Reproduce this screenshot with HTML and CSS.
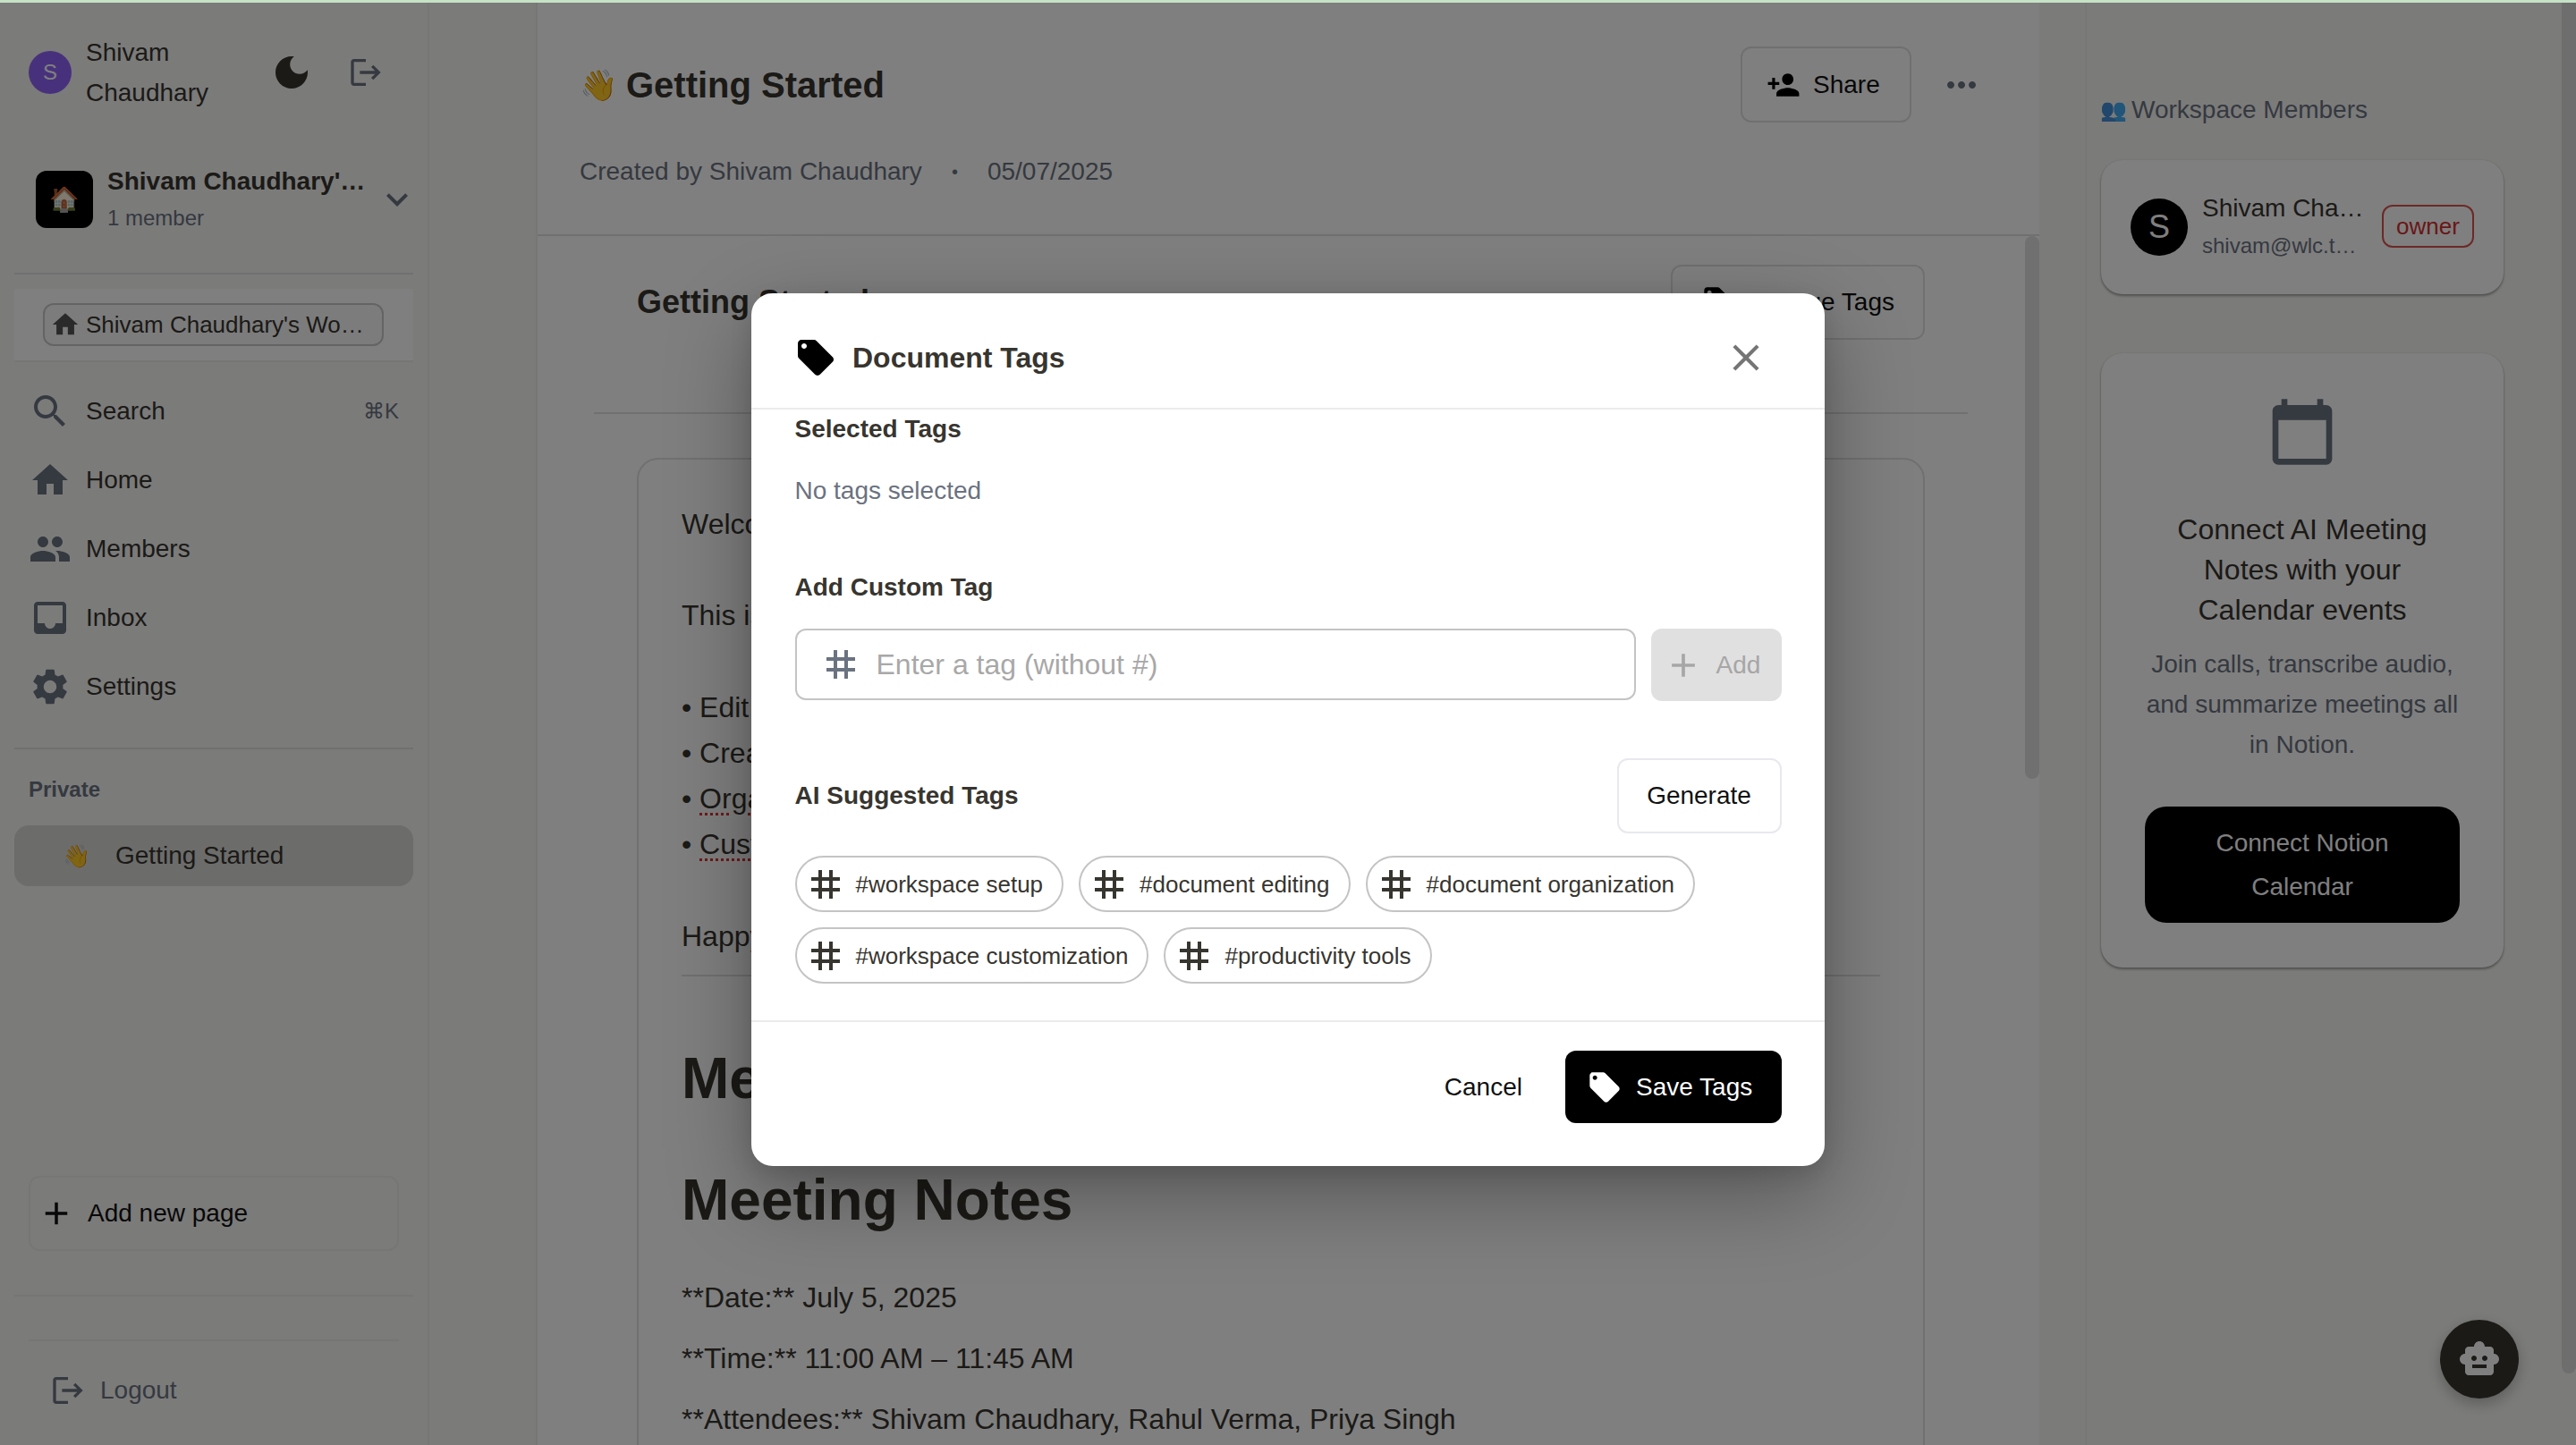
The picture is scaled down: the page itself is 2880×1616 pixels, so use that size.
FILE: index.html
```html
<!DOCTYPE html>
<html lang="en">
<head>
    <meta charset="UTF-8">
    <title>Getting Started</title>
    <link rel="stylesheet" href="styles.css">
</head>
<body>
    <svg class="icon-defs" aria-hidden="true">
        <symbol id="i-search" viewBox="0 0 24 24"><path d="M15.5 14h-.79l-.28-.27C15.41 12.59 16 11.11 16 9.5 16 5.91 13.09 3 9.5 3S3 5.91 3 9.5 5.91 16 9.5 16c1.61 0 3.09-.59 4.23-1.57l.27.28v.79l5 4.99L20.49 19zm-6 0C7.01 14 5 11.99 5 9.5S7.01 5 9.5 5 14 7.01 14 9.5 11.99 14 9.5 14"/></symbol>
        <symbol id="i-home" viewBox="0 0 24 24"><path d="M10 20v-6h4v6h5v-8h3L12 3 2 12h3v8z"/></symbol>
        <symbol id="i-people" viewBox="0 0 24 24"><path d="M16 11c1.66 0 2.99-1.34 2.99-3S17.66 5 16 5c-1.66 0-3 1.34-3 3s1.34 3 3 3m-8 0c1.66 0 2.99-1.34 2.99-3S9.66 5 8 5C6.34 5 5 6.34 5 8s1.34 3 3 3m0 2c-2.33 0-7 1.17-7 3.5V19h14v-2.5c0-2.33-4.67-3.5-7-3.5m8 0c-.29 0-.62.02-.97.05 1.16.84 1.97 1.97 1.97 3.45V19h6v-2.5c0-2.33-4.67-3.5-7-3.5"/></symbol>
        <symbol id="i-inbox" viewBox="0 0 24 24"><path d="M19 3H5c-1.1 0-2 .9-2 2v14c0 1.1.9 2 2 2h14c1.1 0 2-.9 2-2V5c0-1.1-.9-2-2-2m0 12h-4c0 1.66-1.35 3-3 3s-3-1.34-3-3H5V5h14z"/></symbol>
        <symbol id="i-settings" viewBox="0 0 24 24"><path d="M19.14 12.94c.04-.3.06-.61.06-.94 0-.32-.02-.64-.07-.94l2.03-1.58c.18-.14.23-.41.12-.61l-1.92-3.32c-.12-.22-.37-.29-.59-.22l-2.39.96c-.5-.38-1.03-.7-1.62-.94l-.36-2.54c-.04-.24-.24-.41-.48-.41h-3.84c-.24 0-.43.17-.47.41l-.36 2.54c-.59.24-1.13.57-1.62.94l-2.39-.96c-.22-.08-.47 0-.59.22L2.74 8.87c-.12.21-.08.47.12.61l2.03 1.58c-.05.3-.09.63-.09.94s.02.64.07.94l-2.03 1.58c-.18.14-.23.41-.12.61l1.92 3.32c.12.22.37.29.59.22l2.39-.96c.5.38 1.03.7 1.62.94l.36 2.54c.05.24.24.41.48.41h3.84c.24 0 .44-.17.47-.41l.36-2.54c.59-.24 1.13-.56 1.62-.94l2.39.96c.22.08.47 0 .59-.22l1.92-3.32c.12-.22.07-.47-.12-.61zM12 15.6c-1.98 0-3.6-1.62-3.6-3.6s1.62-3.6 3.6-3.6 3.6 1.62 3.6 3.6-1.62 3.6-3.6 3.6"/></symbol>
        <symbol id="i-moon" viewBox="0 0 24 24"><path d="M12 3c-4.97 0-9 4.03-9 9s4.03 9 9 9 9-4.03 9-9c0-.46-.04-.92-.1-1.36-.98 1.37-2.58 2.26-4.4 2.26-2.98 0-5.4-2.42-5.4-5.4 0-1.81.89-3.42 2.26-4.4-.44-.06-.9-.1-1.36-.1"/></symbol>
        <symbol id="i-logout" viewBox="0 0 24 24"><path d="m17 7-1.41 1.41L18.17 11H8v2h10.17l-2.58 2.58L17 17l5-5zM4 5h8V3H4c-1.1 0-2 .9-2 2v14c0 1.1.9 2 2 2h8v-2H4z"/></symbol>
        <symbol id="i-expand" viewBox="0 0 24 24"><path d="M16.59 8.59 12 13.17 7.41 8.59 6 10l6 6 6-6z"/></symbol>
        <symbol id="i-add" viewBox="0 0 24 24"><path d="M19 13h-6v6h-2v-6H5v-2h6V5h2v6h6v2z"/></symbol>
        <symbol id="i-person-add" viewBox="0 0 24 24"><path d="M15 12c2.21 0 4-1.79 4-4s-1.79-4-4-4-4 1.79-4 4 1.79 4 4 4m-9-2V7H4v3H1v2h3v3h2v-3h3v-2zm9 4c-2.67 0-8 1.34-8 4v2h16v-2c0-2.66-5.33-4-8-4"/></symbol>
        <symbol id="i-more" viewBox="0 0 24 24"><path d="M6 10c-1.1 0-2 .9-2 2s.9 2 2 2 2-.9 2-2-.9-2-2-2m12 0c-1.1 0-2 .9-2 2s.9 2 2 2 2-.9 2-2-.9-2-2-2m-6 0c-1.1 0-2 .9-2 2s.9 2 2 2 2-.9 2-2-.9-2-2-2"/></symbol>
        <symbol id="i-label" viewBox="0 0 24 24"><path d="M21.41 11.58l-9-9C12.05 2.22 11.55 2 11 2H4c-1.1 0-2 .9-2 2v7c0 .55.22 1.05.59 1.42l9 9c.36.36.86.58 1.41.58.55 0 1.05-.22 1.41-.59l7-7c.37-.36.59-.86.59-1.41 0-.55-.23-1.06-.59-1.42zM5.5 7C4.67 7 4 6.33 4 5.5S4.67 4 5.5 4 7 4.67 7 5.5 6.33 7 5.5 7z"/></symbol>
        <symbol id="i-close" viewBox="0 0 24 24"><path d="M19 6.41 17.59 5 12 10.59 6.41 5 5 6.41 10.59 12 5 17.59 6.41 19 12 13.41 17.59 19 19 17.59 13.41 12z"/></symbol>
        <symbol id="i-tag" viewBox="0 0 24 24"><path d="M20 10V8h-4V4h-2v4h-4V4H8v4H4v2h4v4H4v2h4v4h2v-4h4v4h2v-4h4v-2h-4v-4zm-6 4h-4v-4h4z"/></symbol>
        <symbol id="i-calendar" viewBox="0 0 24 24"><path d="M20 3h-1V1h-2v2H7V1H5v2H4c-1.1 0-2 .9-2 2v16c0 1.1.9 2 2 2h16c1.1 0 2-.9 2-2V5c0-1.1-.9-2-2-2zm0 18H4V8h16v13z"/></symbol>
        <symbol id="i-bot" viewBox="0 0 24 24"><path d="M20 9V7c0-1.1-.9-2-2-2h-3c0-1.66-1.34-3-3-3S9 3.34 9 5H6c-1.1 0-2 .9-2 2v2c-1.66 0-3 1.34-3 3s1.34 3 3 3v4c0 1.1.9 2 2 2h12c1.1 0 2-.9 2-2v-4c1.66 0 3-1.34 3-3s-1.34-3-3-3zM7.5 11.5c0-.83.67-1.5 1.5-1.5s1.5.67 1.5 1.5S9.83 13 9 13s-1.5-.67-1.5-1.5zM16 17H8v-2h8v2zm-1-4c-.83 0-1.5-.67-1.5-1.5S14.17 10 15 10s1.5.67 1.5 1.5S15.83 13 15 13z"/></symbol>
    </svg>

    <div class="topbar"></div>

    <div class="app">
        <aside class="sidebar">
            <div class="profile">
                <div class="profile-avatar">S</div>
                <div class="profile-name">Shivam Chaudhary</div>
                <svg class="icon moon"><use href="#i-moon"/></svg>
                <svg class="icon profile-logout"><use href="#i-logout"/></svg>
            </div>

            <div class="workspace">
                <div class="workspace-logo">🏠</div>
                <div class="workspace-info">
                    <div class="workspace-name">Shivam Chaudhary's Workspace</div>
                    <div class="workspace-count">1 member</div>
                </div>
                <svg class="icon chevron"><use href="#i-expand"/></svg>
            </div>

            <div class="side-rule side-rule-top"></div>
            <div class="crumb-band">
                <div class="crumb">
                    <svg class="icon crumb-icon"><use href="#i-home"/></svg>
                    <span class="crumb-text">Shivam Chaudhary's Workspace</span>
                </div>
            </div>

            <nav class="nav">
                <a class="nav-item"><svg class="icon"><use href="#i-search"/></svg><span>Search</span><kbd class="shortcut">⌘K</kbd></a>
                <a class="nav-item"><svg class="icon"><use href="#i-home"/></svg><span>Home</span></a>
                <a class="nav-item"><svg class="icon"><use href="#i-people"/></svg><span>Members</span></a>
                <a class="nav-item"><svg class="icon"><use href="#i-inbox"/></svg><span>Inbox</span></a>
                <a class="nav-item"><svg class="icon"><use href="#i-settings"/></svg><span>Settings</span></a>
            </nav>

            <div class="section-label">Private</div>
            <a class="page-item"><span class="page-emoji">👋</span><span>Getting Started</span></a>

            <button class="add-page"><svg class="icon"><use href="#i-add"/></svg><span>Add new page</span></button>
            <div class="side-rule"></div>
            <div class="side-rule side-rule-short"></div>
            <a class="logout"><svg class="icon"><use href="#i-logout"/></svg><span>Logout</span></a>
        </aside>

        <main class="main">
            <header class="doc-header">
                <div class="doc-header-row">
                    <h1 class="doc-title"><span class="doc-emoji">👋</span>Getting Started</h1>
                    <button class="btn-outline share"><svg class="icon"><use href="#i-person-add"/></svg>Share</button>
                    <svg class="icon more"><use href="#i-more"/></svg>
                </div>
                <div class="doc-meta">
                    <span>Created by Shivam Chaudhary</span>
                    <span class="doc-meta-dot">•</span>
                    <span>05/07/2025</span>
                </div>
            </header>

            <div class="doc-scroll">
                <div class="doc-title-row">
                    <h2 class="doc-subtitle">Getting Started</h2>
                    <button class="btn-outline manage"><svg class="icon"><use href="#i-label"/></svg>Manage Tags</button>
                </div>
                <div class="doc-rule"></div>
                <article class="doc-card">
                    <p>Welcome to your workspace</p>
                    <p class="after-blank">This is your first page.</p>
                    <p class="after-blank">• Edit this page</p>
                    <p>• Create new pages</p>
                    <p>• <span class="misspelt">Organize</span> your notes</p>
                    <p>• <span class="misspelt">Customize</span> your space</p>
                    <p class="after-blank">Happy writing!</p>
                    <hr class="doc-hr">
                    <h1 class="doc-h1">Meeting Notes</h1>
                    <h1 class="doc-h1 doc-h1-second">Meeting Notes</h1>
                    <p class="note note-first">**Date:** July 5, 2025</p>
                    <p class="note">**Time:** 11:00 AM – 11:45 AM</p>
                    <p class="note">**Attendees:** Shivam Chaudhary, Rahul Verma, Priya Singh</p>
                </article>
                <div class="doc-thumb"></div>
            </div>
        </main>

        <aside class="panel">
            <div class="panel-title"><span class="panel-emoji">👥</span>Workspace Members</div>
            <div class="card member">
                <div class="member-avatar">S</div>
                <div class="member-info">
                    <div class="member-name">Shivam Chaudhary</div>
                    <div class="member-mail">shivam@wlc.tech.com</div>
                </div>
                <span class="owner-chip">owner</span>
            </div>
            <div class="card calendar">
                <svg class="icon calendar-icon"><use href="#i-calendar"/></svg>
                <h3 class="calendar-title">Connect AI Meeting Notes with your Calendar events</h3>
                <p class="calendar-text">Join calls, transcribe audio, and summarize meetings all in Notion.</p>
                <button class="calendar-btn">Connect Notion Calendar</button>
            </div>
        </aside>
    </div>

    <div class="page-thumb"></div>
    <button class="fab"><svg class="icon"><use href="#i-bot"/></svg></button>

    <div class="overlay">
        <div class="modal">
            <div class="modal-head">
                <svg class="icon modal-tag"><use href="#i-label"/></svg>
                <h2 class="modal-title">Document Tags</h2>
                <svg class="icon modal-close"><use href="#i-close"/></svg>
            </div>
            <div class="modal-body">
                <h4 class="modal-label">Selected Tags</h4>
                <p class="no-tags">No tags selected</p>
                <h4 class="modal-label custom-label">Add Custom Tag</h4>
                <div class="tag-form">
                    <div class="tag-input">
                        <svg class="icon"><use href="#i-tag"/></svg>
                        <input type="text" placeholder="Enter a tag (without #)">
                    </div>
                    <button class="add-btn"><svg class="icon"><use href="#i-add"/></svg>Add</button>
                </div>
                <div class="ai-head">
                    <h4 class="modal-label">AI Suggested Tags</h4>
                    <button class="generate">Generate</button>
                </div>
                <div class="chips">
                    <span class="chip"><svg class="icon"><use href="#i-tag"/></svg>#workspace setup</span>
                    <span class="chip"><svg class="icon"><use href="#i-tag"/></svg>#document editing</span>
                    <span class="chip"><svg class="icon"><use href="#i-tag"/></svg>#document organization</span>
                    <span class="chip"><svg class="icon"><use href="#i-tag"/></svg>#workspace customization</span>
                    <span class="chip"><svg class="icon"><use href="#i-tag"/></svg>#productivity tools</span>
                </div>
            </div>
            <div class="modal-foot">
                <button class="cancel">Cancel</button>
                <button class="save"><svg class="icon"><use href="#i-label"/></svg>Save Tags</button>
            </div>
        </div>
    </div>
</body>
</html>
```

FILE: styles.css
```css
:root {
    --text: #37352f;
    --muted: #6b7280;
    --side-bg: #f7f7f5;
    --line: #e0e0e0;
    --font: "Liberation Sans", Arial, sans-serif;
}

* {
    box-sizing: border-box;
}

body {
    margin: 0;
    width: 2880px;
    height: 1616px;
    overflow: hidden;
    position: relative;
    background: var(--side-bg);
    color: var(--text);
    font-family: var(--font);
    font-size: 28px;
    line-height: 44px;
}

h1, h2, h3, h4, p {
    margin: 0;
}

button {
    font-family: var(--font);
    font-size: 28px;
    cursor: pointer;
    background: none;
    border: none;
    padding: 0;
}

.icon-defs {
    display: none;
}

.icon {
    display: block;
    flex: none;
    width: 48px;
    height: 48px;
    fill: currentColor;
}

.topbar {
    position: relative;
    z-index: 20;
    height: 3px;
    background: #c6e2c6;
}

.app {
    display: flex;
    height: 1613px;
}

/* sidebar */

.sidebar {
    width: 480px;
    flex: none;
    display: flex;
    flex-direction: column;
    border-right: 2px solid #efefed;
}

.profile {
    display: flex;
    align-items: center;
    height: 156px;
    padding-left: 32px;
}

.profile-avatar {
    width: 48px;
    height: 48px;
    flex: none;
    border-radius: 50%;
    background: #9063f8;
    color: #fff;
    font-size: 24px;
    display: flex;
    align-items: center;
    justify-content: center;
}

.profile-name {
    width: 206px;
    margin-left: 16px;
    line-height: 45px;
}

.moon {
    color: var(--text);
}

.profile-logout {
    width: 40px;
    height: 40px;
    margin-left: 39px;
    color: var(--muted);
}

.workspace {
    display: flex;
    align-items: center;
    margin-top: 24px;
    padding-left: 40px;
}

.workspace-logo {
    width: 64px;
    height: 64px;
    flex: none;
    background: #000;
    border-radius: 12px;
    font-size: 27px;
    display: flex;
    align-items: center;
    justify-content: center;
}

.workspace-info {
    width: 290px;
    margin-left: 16px;
}

.workspace-name {
    font-weight: 700;
    line-height: 40px;
    white-space: nowrap;
    overflow: hidden;
    text-overflow: ellipsis;
}

.workspace-count {
    margin-top: 3px;
    font-size: 24px;
    line-height: 36px;
    color: var(--muted);
}

.chevron {
    margin-left: 10px;
    color: var(--muted);
}

.side-rule {
    flex: none;
    height: 2px;
    margin: 49px 16px 0;
    background: #ececea;
}

.side-rule-top {
    margin-top: 43px;
    background: var(--line);
}

.side-rule-short {
    margin: 48px 32px 0;
}

.crumb-band {
    margin: 16px 16px 0;
    padding: 16px 0 16px 32px;
    background: #fefefe;
    border-bottom: 2px solid #ececea;
}

.crumb {
    display: flex;
    align-items: center;
    width: 381px;
    height: 48px;
    padding: 0 16px 0 6px;
    border: 2px solid #c8c8c8;
    border-radius: 12px;
    background: #f9f9f8;
}

.crumb-icon {
    width: 34px;
    height: 34px;
    color: #555;
}

.crumb-text {
    margin-left: 6px;
    font-size: 26px;
    white-space: nowrap;
    overflow: hidden;
    text-overflow: ellipsis;
}

.nav {
    margin-top: 16px;
}

.nav-item {
    display: flex;
    align-items: center;
    gap: 16px;
    height: 77px;
    padding: 0 32px;
}

.nav-item .icon {
    color: var(--muted);
}

.shortcut {
    margin-left: auto;
    font-family: var(--font);
    font-size: 24px;
    color: var(--muted);
}

.section-label {
    margin: 30px 16px 0;
    padding: 27px 0 0 16px;
    border-top: 2px solid var(--line);
    font-size: 24px;
    line-height: 36px;
    font-weight: 700;
    color: var(--muted);
}

.page-item {
    display: flex;
    align-items: center;
    height: 68px;
    margin: 22px 16px 0;
    padding-left: 54px;
    border-radius: 16px;
    background: #d8d8d6;
}

.page-emoji {
    width: 59px;
    font-size: 25px;
}

.add-page {
    display: flex;
    align-items: center;
    height: 84px;
    margin: auto 32px 0;
    padding-left: 8px;
    border: 2px solid #ececea;
    border-radius: 12px;
    color: #111;
}

.add-page .icon {
    width: 42px;
    height: 42px;
    margin-right: 14px;
}

.logout {
    display: flex;
    align-items: center;
    gap: 16px;
    height: 110px;
    margin-bottom: 6px;
    padding-left: 56px;
    color: var(--muted);
}

.logout .icon {
    width: 40px;
    height: 40px;
}

/* document */

.main {
    width: 1681px;
    flex: none;
    margin-left: 119px;
    display: flex;
    flex-direction: column;
    background: #fff;
    border-left: 2px solid #efefed;
}

.doc-header {
    flex: none;
    height: 261px;
    padding: 49px 63px 0 47px;
    border-bottom: 2px solid var(--line);
}

.doc-header-row {
    display: flex;
    align-items: center;
}

.doc-title {
    flex: 1;
    display: flex;
    align-items: center;
    padding-top: 2px;
    font-size: 40px;
    line-height: 83px;
}

.doc-emoji {
    width: 52px;
    font-size: 34px;
    font-weight: 400;
}

.btn-outline {
    display: flex;
    align-items: center;
    color: #111;
    border: 2px solid var(--line);
    border-radius: 12px;
    background: #fff;
}

.share {
    height: 85px;
    width: 191px;
    padding-left: 27px;
}

.share .icon {
    width: 38px;
    height: 38px;
    margin-right: 14px;
    color: #000;
}

.more {
    margin-left: 32px;
    color: var(--muted);
}

.doc-meta {
    display: flex;
    gap: 33px;
    margin-top: 35px;
    line-height: 40px;
    color: var(--muted);
}

.doc-meta-dot {
    font-size: 20px;
}

.doc-scroll {
    flex: 1;
    min-height: 0;
    overflow: hidden;
    position: relative;
    padding: 32px 128px 0 111px;
}

.doc-title-row {
    display: flex;
    align-items: center;
    justify-content: space-between;
}

.doc-subtitle {
    font-size: 36px;
}

.manage {
    height: 84px;
    padding: 0 32px;
}

.manage .icon {
    width: 40px;
    height: 40px;
    margin-right: 8px;
    color: #000;
}

.doc-rule {
    height: 2px;
    margin: 81px -48px 0 -48px;
    background: var(--line);
}

.doc-card {
    margin-top: 49px;
    height: 1200px;
    padding: 47px 48px 0;
    border: 2px solid var(--line);
    border-radius: 24px;
    font-size: 32px;
    line-height: 51.2px;
}

.after-blank {
    margin-top: 51.2px;
}

.misspelt {
    text-decoration: underline dotted #d33;
    text-decoration-thickness: 3px;
    text-underline-offset: 5px;
}

.doc-hr {
    height: 2px;
    margin: 17px 0 0;
    border: none;
    background: var(--line);
}

.doc-h1 {
    margin-top: 76px;
    font-size: 64px;
    line-height: 76px;
}

.doc-h1-second {
    margin-top: 60px;
}

.note {
    margin-top: 17px;
}

.note-first {
    margin-top: 46px;
}

.doc-thumb {
    position: absolute;
    top: 0;
    right: 0;
    width: 16px;
    height: 607px;
    border-radius: 8px;
    background: #e0e0e0;
}

/* right panel */

.panel {
    flex: 1;
    margin-left: 51px;
    padding: 100px 0 0 16px;
    border-left: 2px solid #efefed;
}

.panel-title {
    display: flex;
    align-items: center;
    line-height: 40px;
    color: var(--muted);
}

.panel-emoji {
    width: 35px;
    margin-left: -1px;
    font-size: 24px;
    opacity: 0.8;
}

.card {
    width: 450px;
    background: #fff;
    border-radius: 24px;
    box-shadow: 0 2px 3px rgba(0, 0, 0, 0.35), 0 0 2px rgba(0, 0, 0, 0.12);
}

.member {
    display: flex;
    align-items: center;
    height: 150px;
    margin-top: 36px;
    padding-left: 33px;
}

.member-avatar {
    width: 64px;
    height: 64px;
    flex: none;
    border-radius: 50%;
    background: #000;
    color: #fff;
    font-size: 36px;
    display: flex;
    align-items: center;
    justify-content: center;
}

.member-info {
    width: 182px;
    margin-left: 16px;
}

.member-name, .member-mail {
    white-space: nowrap;
    overflow: hidden;
    text-overflow: ellipsis;
}

.member-name {
    line-height: 42px;
}

.member-mail {
    font-size: 24px;
    line-height: 42px;
    color: var(--muted);
}

.owner-chip {
    height: 48px;
    width: 103px;
    margin: 0 0 2px 19px;
    border: 2px solid #d9534f;
    border-radius: 12px;
    font-size: 26px;
    line-height: 44px;
    text-align: center;
    color: #d32f2f;
}

.calendar {
    height: 687px;
    margin-top: 66px;
    padding: 48px 49px 0;
    text-align: center;
}

.calendar-icon {
    width: 80px;
    height: 80px;
    margin: 0 auto;
    color: var(--muted);
}

.calendar-title {
    margin-top: 47px;
    font-size: 32px;
    line-height: 45px;
    font-weight: 400;
}

.calendar-text {
    margin-top: 15px;
    line-height: 45px;
    color: var(--muted);
}

.calendar-btn {
    display: block;
    width: 352px;
    height: 130px;
    margin-top: 47px;
    padding: 0 40px;
    border-radius: 24px;
    background: #000;
    color: #fff;
    line-height: 49px;
}

.page-thumb {
    position: absolute;
    top: 3px;
    right: 0;
    width: 16px;
    height: 1533px;
    border-radius: 0 0 8px 8px;
    background: #dcdcdc;
}

.fab {
    position: absolute;
    left: 2728px;
    top: 1476px;
    width: 88px;
    height: 88px;
    display: flex;
    align-items: center;
    justify-content: center;
    border-radius: 50%;
    background: var(--text);
    color: #fff;
    box-shadow: 0 6px 16px rgba(0, 0, 0, 0.25);
}

/* tags dialog */

.overlay {
    position: absolute;
    inset: 3px 0 0 0;
    z-index: 10;
    display: flex;
    justify-content: center;
    padding-top: 325px;
    background: rgba(0, 0, 0, 0.5);
}

.modal {
    width: 1200px;
    height: 976px;
    background: #fff;
    border-radius: 24px;
    box-shadow: 0 32px 96px rgba(0, 0, 0, 0.32), 0 8px 24px rgba(0, 0, 0, 0.12);
    display: flex;
    flex-direction: column;
}

.modal-head {
    flex: none;
    display: flex;
    align-items: center;
    height: 130px;
    padding: 32px 63px 16px 48px;
    border-bottom: 2px solid #ebebeb;
}

.modal-tag {
    color: #000;
}

.modal-title {
    flex: 1;
    margin-left: 17px;
    font-size: 32px;
}

.modal-close {
    width: 50px;
    height: 50px;
    color: #757575;
}

.modal-body {
    padding: 0 48.5px;
}

.modal-label {
    font-size: 28px;
    line-height: 44px;
}

.no-tags {
    margin-top: 25px;
    color: var(--muted);
}

.custom-label {
    margin-top: 64px;
}

.tag-form {
    display: flex;
    gap: 17px;
    margin-top: 24px;
}

.tag-input {
    width: 940px;
    height: 80px;
    display: flex;
    align-items: center;
    padding-left: 25px;
    border: 2px solid #c4c4c4;
    border-radius: 12px;
    color: var(--muted);
}

.tag-input input {
    flex: 1;
    min-width: 0;
    margin-left: 16px;
    padding: 0;
    border: none;
    outline: none;
    font-family: var(--font);
    font-size: 32px;
}

.tag-input input::placeholder {
    color: #a8a8a8;
}

.add-btn {
    display: flex;
    align-items: center;
    width: 146px;
    height: 81px;
    padding-left: 14px;
    border-radius: 12px;
    background: #e0e0e0;
    color: #a6a6a6;
}

.add-btn .icon {
    width: 44px;
    height: 44px;
    margin-right: 15px;
}

.ai-head {
    display: flex;
    align-items: center;
    justify-content: space-between;
    margin-top: 64px;
}

.generate {
    width: 184px;
    height: 84px;
    border: 2px solid #e8e8ee;
    border-radius: 12px;
    color: #111;
}

.chips {
    display: flex;
    flex-wrap: wrap;
    gap: 17px;
    margin-top: 25px;
    width: 1050px;
}

.chip {
    display: flex;
    align-items: center;
    height: 63px;
    padding: 0 21px 0 8px;
    border: 2px solid #c4c4c4;
    border-radius: 32px;
    font-size: 26px;
}

.chip .icon {
    margin-right: 10px;
}

.modal-foot {
    margin-top: 41px;
    flex: 1;
    display: flex;
    align-items: flex-start;
    justify-content: flex-end;
    gap: 48px;
    padding: 32px 48px 0 0;
    border-top: 2px solid #ebebeb;
}

.cancel {
    height: 81px;
    color: #111;
}

.save {
    display: flex;
    align-items: center;
    width: 242px;
    height: 81px;
    padding-left: 24px;
    border-radius: 12px;
    background: #000;
    color: #fff;
}

.save .icon {
    width: 40px;
    height: 40px;
    margin-right: 15px;
}
```
